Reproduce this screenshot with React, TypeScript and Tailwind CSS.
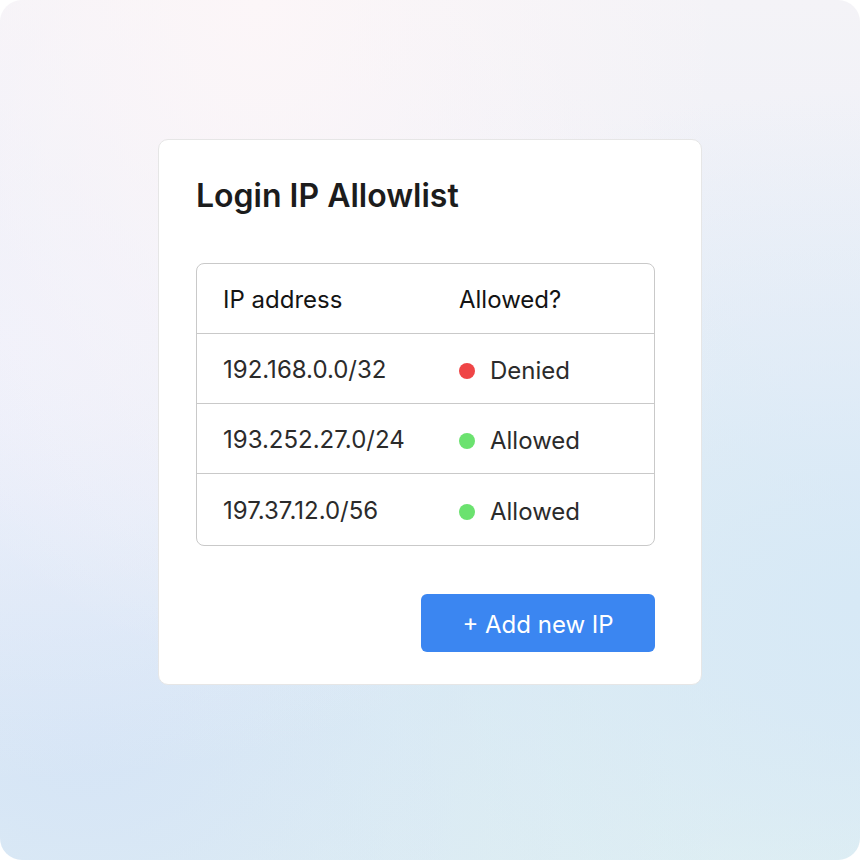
const rows = [
  { ip: '192.168.0.0/32', allowed: false },
  { ip: '193.252.27.0/24', allowed: true },
  { ip: '197.37.12.0/56', allowed: true },
];

export default function App() {
  return (
    <div className="w-[860px] h-[860px] bg-white" style={{ fontFamily: 'Inter, "Noto Sans", sans-serif' }}>
      <div className="w-full h-full rounded-[22px] bg-[radial-gradient(ellipse_at_30%_0%,#fcf6f8_0%,transparent_55%),radial-gradient(ellipse_at_0%_40%,#eef0fb_0%,transparent_60%),radial-gradient(ellipse_at_100%_70%,#d7e9f6_0%,transparent_60%),radial-gradient(ellipse_at_10%_85%,#d6e5f6_0%,transparent_60%),radial-gradient(ellipse_at_60%_100%,#e3f2f0_0%,transparent_55%),linear-gradient(180deg,#f4f3f7_0%,#eceff8_45%,#dae8f4_80%,#e2f1f2_100%)] flex justify-center pt-[139px]">
        <div className="w-[544px] h-[546px] bg-white rounded-[10px] border border-[#e6e6e6] pl-[37px] pr-[46px] pt-[36px]">
          <h1 className="text-[32px] leading-[40px] font-semibold text-[#1c1c1c]">Login IP Allowlist</h1>
          <div className="mt-[47px] border border-[#c9c9c9] rounded-[8px] overflow-hidden">
            <div className="h-[70px] flex items-center pt-[3px] border-b border-[#c9c9c9] text-[24px] text-[#141414]">
              <div className="w-[262px] pl-[26px]">IP address</div>
              <div>Allowed?</div>
            </div>
            {rows.map((r, i) => (
              <div
                key={r.ip}
                className={`flex items-center pt-[3px] text-[24px] text-[#2b2b2b] ${i < rows.length - 1 ? 'h-[70px] border-b border-[#c9c9c9]' : 'h-[71px]'}`}
              >
                <div className="w-[262px] pl-[26px]">{r.ip}</div>
                <div className="flex items-center gap-[15px] pt-[2px]">
                  <span className={`w-[16px] h-[16px] rounded-full ${r.allowed ? 'bg-[#6be26f]' : 'bg-[#ef4546]'}`} />
                  <span>{r.allowed ? 'Allowed' : 'Denied'}</span>
                </div>
              </div>
            ))}
          </div>
          <div className="flex justify-end mt-[48px]">
            <button className="w-[234px] h-[58px] rounded-[6px] bg-[#3b86f1] text-white text-[24px] pt-[3px]">+ Add new IP</button>
          </div>
        </div>
      </div>
    </div>
  );
}
